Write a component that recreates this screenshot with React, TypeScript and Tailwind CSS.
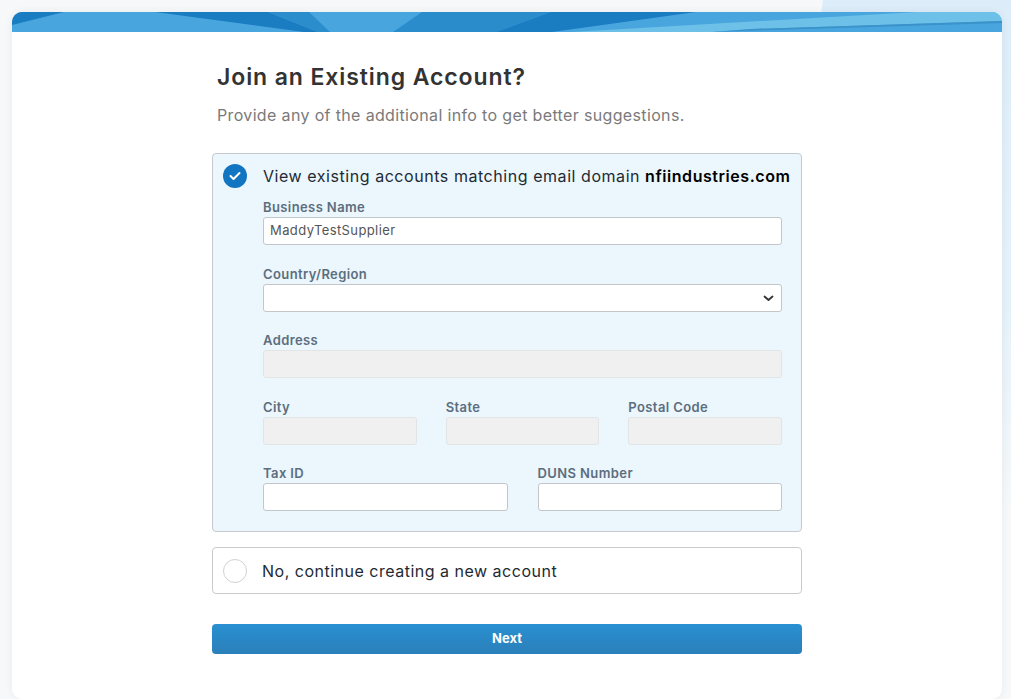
import React from "react";

function Field({ label, disabled, value, select }: { label: string; disabled?: boolean; value?: string; select?: boolean }) {
  return (
    <div className="flex flex-col">
      <div className="h-[19px] text-[13px] leading-[19px] font-semibold tracking-[0.4px] text-[#5c6e7e]">{label}</div>
      <div
        className={
          "relative flex h-[28px] items-center rounded-[3px] border px-[6px] text-[13px] tracking-[0.4px] text-[#555] " +
          (disabled ? "border-[#e2e4e6] bg-[#f0f0f0]" : "border-[#c4c7ca] bg-white")
        }
      >
        {value}
        {select && (
          <svg className="absolute right-[7px] top-[10px]" width="11" height="7" viewBox="0 0 11 7">
            <polyline points="1.5,1.5 5.5,5 9.5,1.5" fill="none" stroke="#333" strokeWidth="1.8" strokeLinecap="round" strokeLinejoin="round" />
          </svg>
        )}
      </div>
    </div>
  );
}

export default function App() {
  return (
    <div className="relative min-h-[699px] w-full overflow-hidden bg-[#f7f8f9] font-['Inter',sans-serif]">
      <svg className="absolute right-0 top-0" width="260" height="699" viewBox="0 0 260 699">
        <defs>
          <linearGradient id="bgfade" x1="0" y1="0" x2="0" y2="1">
            <stop offset="0" stopColor="#dcedf9" />
            <stop offset="0.45" stopColor="#e6f2fa" />
            <stop offset="0.75" stopColor="#f7f8f9" />
          </linearGradient>
        </defs>
        <polygon points="72,0 260,0 260,699 0,699 0,480" fill="url(#bgfade)" />
      </svg>
      <div className="relative pl-[12px] pr-[9px] pt-[12px]">
        <div className="h-[687px] overflow-hidden rounded-[10px] bg-white shadow-[0_0_8px_rgba(0,0,0,0.06)]">
          <svg className="block" width="990" height="20" viewBox="0 0 990 20" preserveAspectRatio="none">
            <rect x="0" y="0" width="990" height="20" fill="#48a5de" />
            <polygon points="0,0 52,0 0,13" fill="#1a7cc1" />
            <polygon points="143,0 256,0 306,20 292,20" fill="#1a7cc1" />
            <polygon points="256,0 297,0 318,20 306,20" fill="#2b8dcc" />
            <polygon points="410,0 539,0 484,20 381,20" fill="#2a8ccb" />
            <polygon points="539,0 684,0 540,20 484,20" fill="#1a7cc1" />
            <polygon points="560,20 905,0 990,0 990,9 740,17 700,20" fill="#6dc0e7" />
            <polygon points="700,20 740,17 990,9 990,11 760,18" fill="#3a92c8" />
          </svg>
          <div className="mx-auto w-[590px] pt-[30px]">
            <h1 className="pl-[5px] text-[23px] leading-[30px] font-semibold tracking-[0.9px] text-[#333]">Join an Existing Account?</h1>
            <p className="mt-[11px] pl-[5px] text-[16px] leading-[24px] tracking-[0.35px] text-[#7a7a7a]">
              Provide any of the additional info to get better suggestions.
            </p>
            <div className="mt-[26px] rounded-[4px] border border-[#c6cacf] bg-[#ebf6fd] pb-[20px] pl-[10px] pr-[19px] pt-[10px]">
              <div className="flex h-[24px] items-center">
                <div className="flex h-[24px] w-[24px] shrink-0 items-center justify-center rounded-full bg-[#1275c1]">
                  <svg width="12" height="10" viewBox="0 0 12 10">
                    <polyline points="1.5,5 4.5,8 10.5,2" fill="none" stroke="#fff" strokeWidth="2" strokeLinecap="round" strokeLinejoin="round" />
                  </svg>
                </div>
                <div className="ml-[16px] whitespace-nowrap text-[16px] leading-[24px] tracking-[0.55px] text-[#1e2a33]">
                  View existing accounts matching email domain <span className="font-semibold text-black">nfiindustries.com</span>
                </div>
              </div>
              <div className="mt-[10px] flex flex-col pl-[40px]">
                <Field label="Business Name" value="MaddyTestSupplier" />
                <div className="mt-[20px]">
                  <Field label="Country/Region" select />
                </div>
                <div className="mt-[19px]">
                  <Field label="Address" disabled />
                </div>
                <div className="mt-[20px] grid grid-cols-3 gap-x-[29px]">
                  <Field label="City" disabled />
                  <Field label="State" disabled />
                  <Field label="Postal Code" disabled />
                </div>
                <div className="mt-[19px] grid grid-cols-2 gap-x-[30px]">
                  <Field label="Tax ID" />
                  <Field label="DUNS Number" />
                </div>
              </div>
            </div>
            <div className="mt-[15px] flex h-[47px] items-center rounded-[4px] border border-[#c8cacc] bg-white pl-[10px]">
              <div className="h-[24px] w-[24px] shrink-0 rounded-full border border-[#cfd2d4] bg-white" />
              <div className="ml-[15px] text-[16px] leading-[24px] tracking-[0.5px] text-[#1e2a33]">No, continue creating a new account</div>
            </div>
            <button className="mt-[30px] flex h-[30px] w-full items-center justify-center rounded-[4px] bg-gradient-to-b from-[#2990d1] to-[#2a7fb9] text-[13px] font-bold text-white">
              Next
            </button>
          </div>
        </div>
      </div>
    </div>
  );
}
